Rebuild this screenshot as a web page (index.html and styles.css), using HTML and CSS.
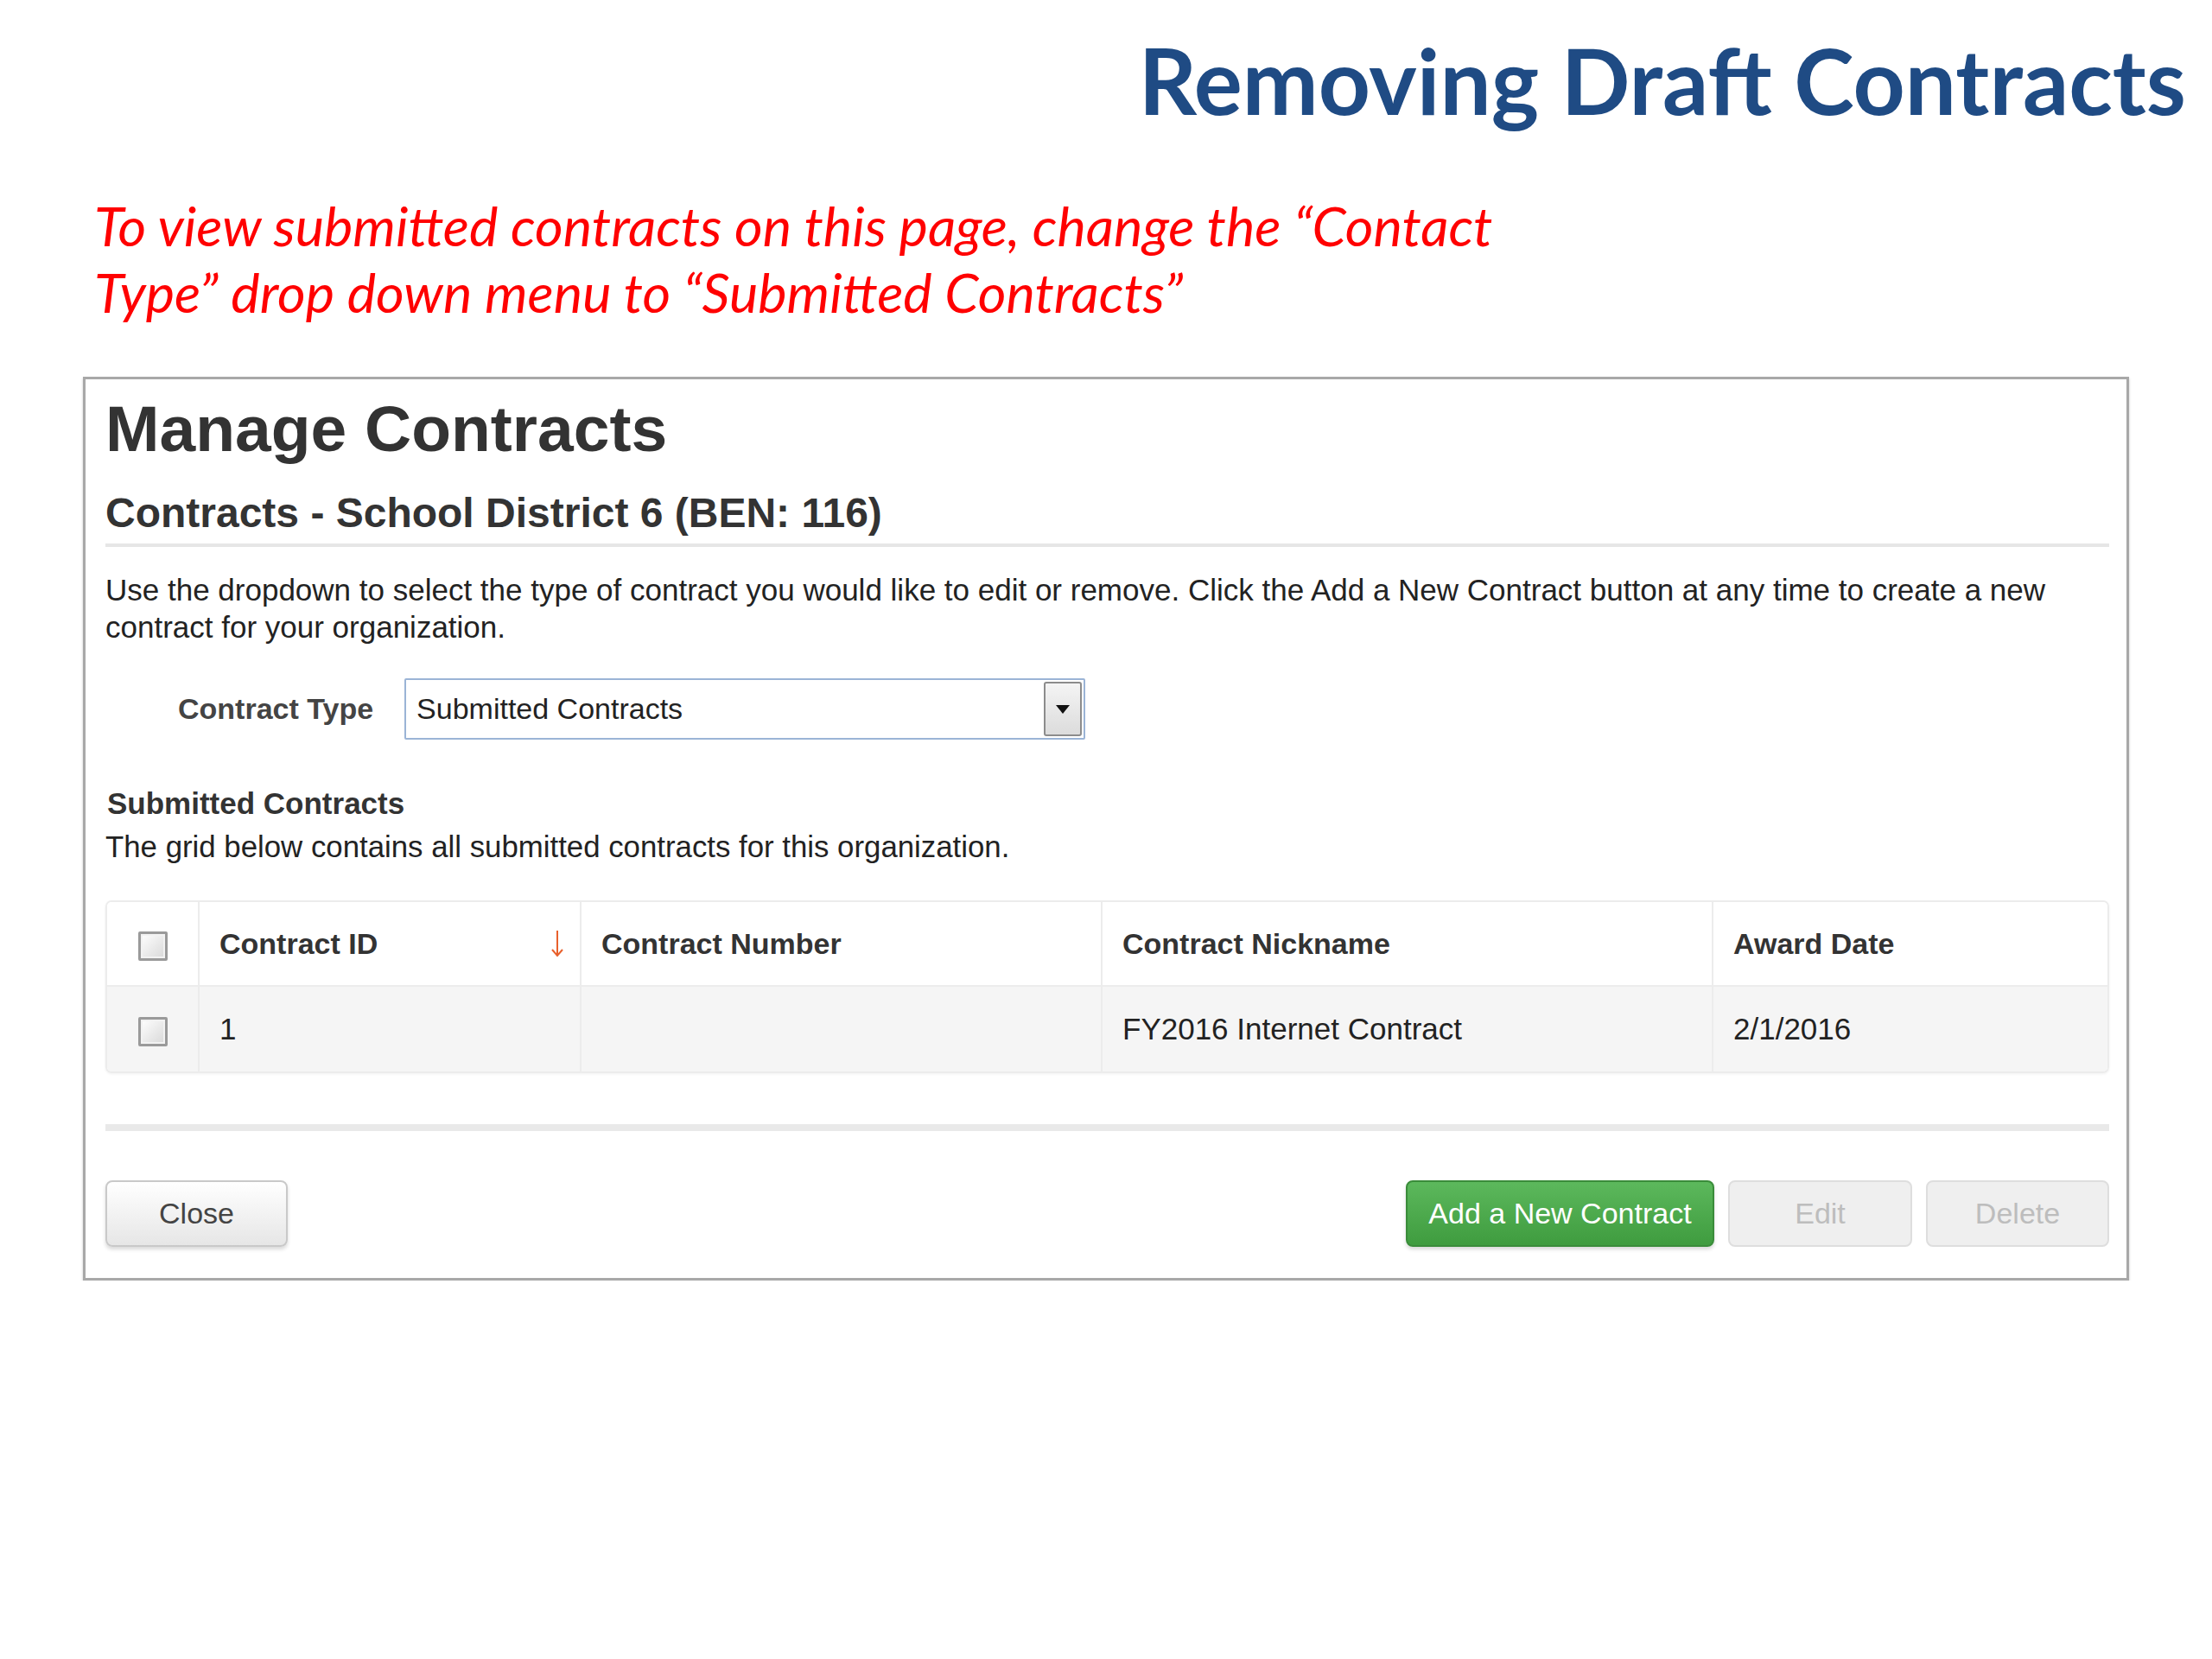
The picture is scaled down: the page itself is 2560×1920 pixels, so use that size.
FILE: index.html
```html
<!DOCTYPE html>
<html lang="en">

<head>
  <meta charset="UTF-8">
  <meta name="viewport" content="width=device-width, initial-scale=1.0">
  <title>Removing Draft Contracts</title>
  <link rel="stylesheet" href="styles.css">
</head>

<body>
  <div class="slide">
    <h1 class="slide-title">Removing Draft Contracts</h1>
    <p class="note">To view submitted contracts on this page, change the “Contact<br>Type” drop down menu to “Submitted Contracts”</p>

    <div class="window">
      <h2 class="page-title">Manage Contracts</h2>
      <h3 class="org-title">Contracts - School District 6 (BEN: 116)</h3>
      <p class="intro">Use the dropdown to select the type of contract you would like to edit or remove. Click the Add a New Contract button at any time to create a new contract for your organization.</p>

      <div class="filter">
        <label class="filter-label">Contract Type</label>
        <div class="select">
          <span class="select-value">Submitted Contracts</span>
          <span class="select-btn">
            <svg width="20" height="14" viewBox="0 0 20 14"><path d="M2 2 L18 2 L10 12 Z" fill="#111"/></svg>
          </span>
        </div>
      </div>

      <h4 class="grid-title">Submitted Contracts</h4>
      <p class="grid-desc">The grid below contains all submitted contracts for this organization.</p>

      <div class="grid">
        <table>
          <thead>
            <tr>
              <th class="col-check"><span class="checkbox"></span></th>
              <th class="col-id">
                <div class="sort-cell">
                  <span>Contract ID</span>
                  <svg class="sort-arrow" width="16" height="34" viewBox="0 0 16 34"><path d="M8 2 L8 31 M2 24 L8 31 L14 24" fill="none" stroke="#e8602c" stroke-width="2"/></svg>
                </div>
              </th>
              <th class="col-number">Contract Number</th>
              <th class="col-nick">Contract Nickname</th>
              <th class="col-date">Award Date</th>
            </tr>
          </thead>
          <tbody>
            <tr>
              <td class="col-check"><span class="checkbox"></span></td>
              <td>1</td>
              <td></td>
              <td>FY2016 Internet Contract</td>
              <td>2/1/2016</td>
            </tr>
          </tbody>
        </table>
      </div>

      <div class="divider"></div>

      <div class="actions">
        <button class="btn btn-close">Close</button>
        <div class="actions-right">
          <button class="btn btn-add">Add a New Contract</button>
          <button class="btn btn-edit" disabled>Edit</button>
          <button class="btn btn-delete" disabled>Delete</button>
        </div>
      </div>
    </div>
  </div>
</body>

</html>
```

FILE: styles.css
```css
/* slide */

body {
  margin: 0;
  background-color: #fff;
}

.slide {
  width: 2560px;
  padding-top: 42px;
  font-family: Lato, "Open Sans", sans-serif;
}

.slide-title {
  margin: 0;
  padding-right: 30px;
  font-size: 105px;
  line-height: 100px;
  font-weight: 700;
  text-align: right;
  color: #1f4b84;
}

.note {
  margin: 80px 0 0 109px;
  font-size: 63px;
  line-height: 77px;
  font-style: italic;
  color: #ff0000;
}

/* screenshot window */

.window {
  box-sizing: border-box;
  width: 2368px;
  margin: 60px 0 0 96px;
  padding: 12px 20px 36px 23px;
  border: 3px solid #a8a8a8;
  box-shadow: 0 2px 3px rgba(0, 0, 0, 0.2);
  font-family: "Liberation Sans", Arial, sans-serif;
  color: #222;
}

.page-title {
  margin: 0;
  font-size: 75px;
  line-height: 90px;
  font-weight: 700;
  color: #333;
}

.org-title {
  margin: 24px 0 0;
  padding-bottom: 6px;
  border-bottom: 4px solid #e6e6e6;
  font-size: 48px;
  line-height: 58px;
  font-weight: 700;
  color: #333;
}

.intro {
  margin: 28px 0 0;
  font-size: 35px;
  line-height: 43px;
}

.filter {
  display: flex;
  align-items: center;
  gap: 36px;
  margin-top: 38px;
  padding-left: 84px;
}

.filter-label {
  font-size: 34px;
  font-weight: 700;
  color: #444;
}

.select {
  box-sizing: border-box;
  display: flex;
  align-items: center;
  justify-content: space-between;
  width: 788px;
  height: 71px;
  padding: 0 2px 0 12px;
  border: 2px solid #9bb4d6;
  border-radius: 2px;
  background-color: #fff;
}

.select-value {
  font-size: 34px;
}

.select-btn {
  box-sizing: border-box;
  display: flex;
  align-items: center;
  justify-content: center;
  width: 44px;
  height: 63px;
  border: 2px solid #8c8c8c;
  border-radius: 3px;
  background: linear-gradient(#f4f4f4, #dcdcdc);
}

.grid-title {
  margin: 54px 0 0 2px;
  font-size: 35px;
  line-height: 40px;
  font-weight: 700;
  color: #333;
}

.grid-desc {
  margin: 10px 0 0;
  font-size: 34.8px;
  line-height: 40px;
}

/* grid */

.grid {
  margin-top: 42px;
  border: 2px solid #ececec;
  border-radius: 7px;
  overflow: hidden;
  box-shadow: 0 1px 3px rgba(0, 0, 0, 0.06);
}

.grid table {
  width: 100%;
  border-collapse: collapse;
  table-layout: fixed;
}

.grid th,
.grid td {
  padding: 0 18px 0 23px;
  border-left: 2px solid #ececec;
  text-align: left;
  font-size: 35px;
  color: #222;
}

.grid th:first-child,
.grid td:first-child {
  border-left: none;
}

.grid th {
  height: 96px;
  font-weight: 700;
  font-size: 34px;
  color: #333;
  background-color: #fff;
  border-bottom: 2px solid #ececec;
}

.grid td {
  height: 98px;
  background-color: #f5f5f5;
}

.grid .col-check {
  width: 105px;
  padding: 0;
  text-align: center;
}

.col-id {
  width: 399px;
}

.col-number {
  width: 560px;
}

.col-nick {
  width: 664px;
}

.sort-cell {
  display: flex;
  align-items: center;
  justify-content: space-between;
}

.checkbox {
  box-sizing: border-box;
  display: inline-block;
  width: 34px;
  height: 34px;
  vertical-align: middle;
  border: 3px solid #9a9a9a;
  border-radius: 2px;
  background: linear-gradient(135deg, #fff, #d8d8d8);
  box-shadow: inset 0 0 0 2px #f2f2f2;
}

.divider {
  height: 8px;
  margin-top: 59px;
  background-color: #e9e9e9;
}

/* buttons */

.actions {
  display: flex;
  justify-content: space-between;
  margin-top: 57px;
}

.actions-right {
  display: flex;
  gap: 16px;
}

.btn {
  box-sizing: border-box;
  height: 77px;
  border: 2px solid #c9c9c9;
  border-radius: 8px;
  font-family: "Liberation Sans", Arial, sans-serif;
  font-size: 34px;
  color: #444;
  background: linear-gradient(#ffffff, #e6e6e6);
  box-shadow: 0 3px 4px rgba(0, 0, 0, 0.15);
}

.btn-close {
  width: 211px;
}

.btn-add {
  width: 357px;
  border-color: #3a8c3a;
  color: #fff;
  background: linear-gradient(#5cb85c, #3f9c3f);
}

.btn-edit {
  width: 213px;
}

.btn-delete {
  width: 212px;
}

.btn:disabled {
  border-color: #dedede;
  color: #bdbdbd;
  background: #efefef;
  box-shadow: none;
}
```
